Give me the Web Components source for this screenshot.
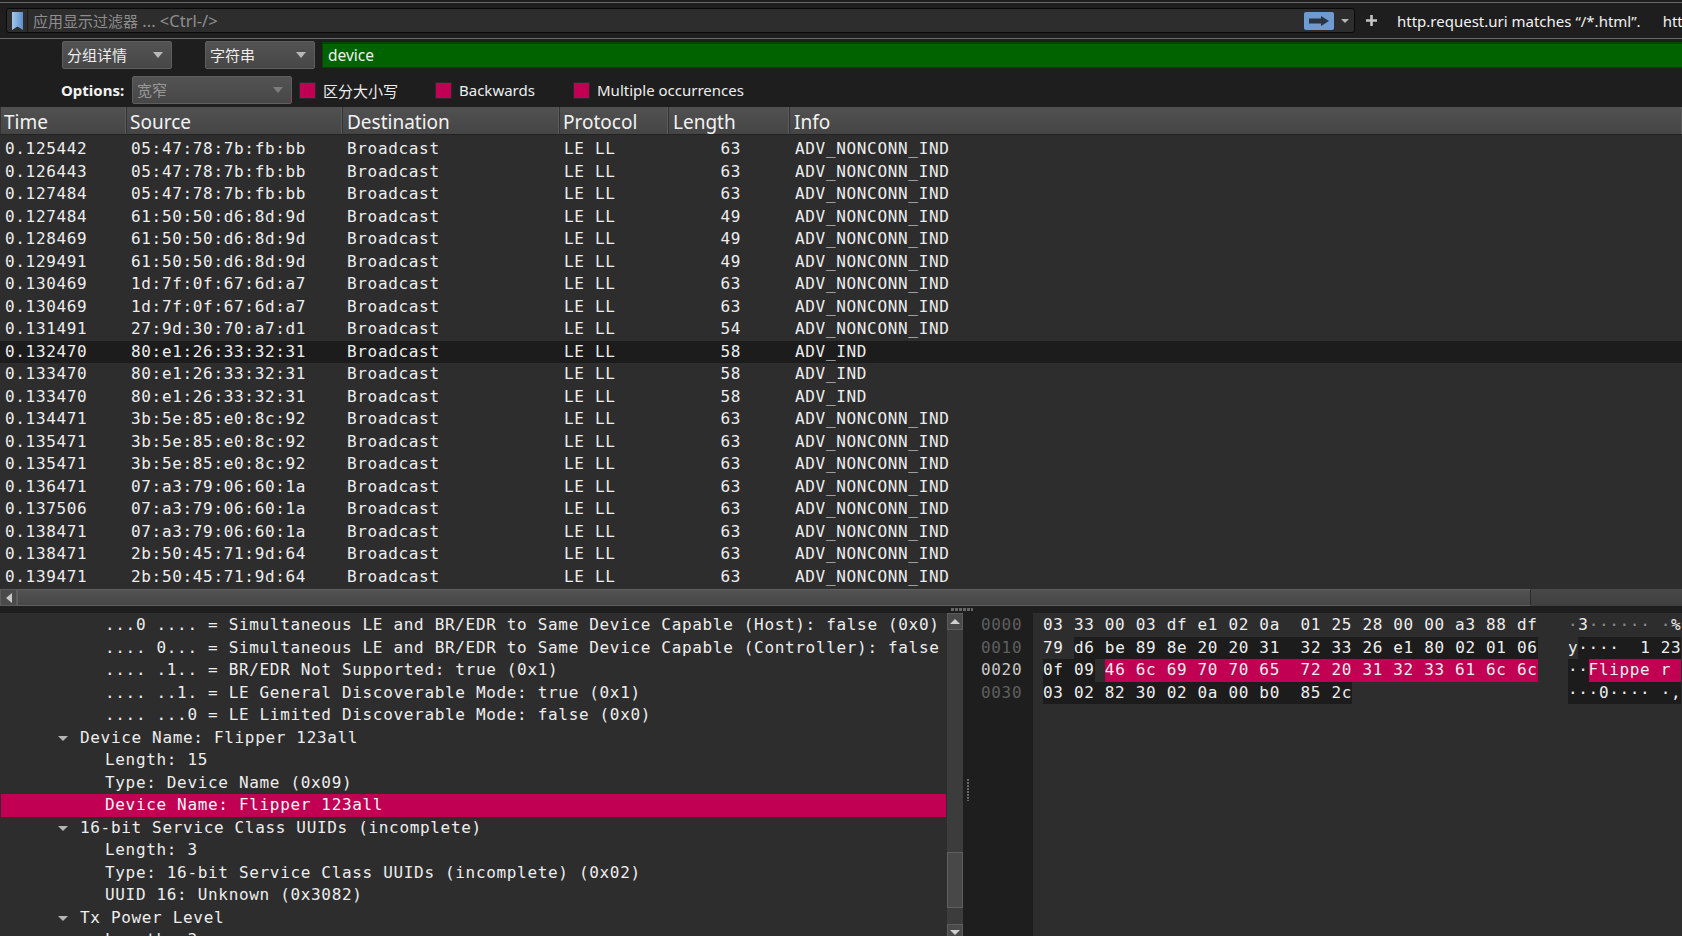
<!DOCTYPE html>
<html>
<head>
<meta charset="utf-8">
<style>
  html, body { margin: 0; height: 100%; background: #1e1e1e; overflow: hidden; }
  body { display: flex; flex-direction: column; height: 936px; font-family: "Noto Sans", "Noto Sans CJK SC", sans-serif; color: #eee; }
</style>
</head>
<body>
<filter-toolbar></filter-toolbar>
<find-bar></find-bar>
<packet-list></packet-list>
<h-scrollbar></h-scrollbar>
<lower-panes>
  <packet-details slot="details"></packet-details>
  <packet-bytes slot="bytes"></packet-bytes>
</lower-panes>

<script>
const MONO = `font-family: "DejaVu Sans Mono", monospace; font-size: 16px; letter-spacing: .67px;`;
const UI_CJK = `"Noto Sans", "Noto Sans CJK SC", sans-serif`;

class FilterToolbar extends HTMLElement {
  connectedCallback() {
    this.attachShadow({ mode: 'open' });
    this.shadowRoot.innerHTML = `
      <style>
        :host { display: flex; align-items: center; height: 37px; margin-top: 2px; box-sizing: border-box; flex: none;
          border-top: 1px solid #6a6a6a; border-bottom: 1px solid #6a6a6a; background: #1e1e1e; font-family: ${UI_CJK}; overflow: hidden; }
        .box { width: 1349px; height: 25px; margin-left: 6px; flex: none; background: #2d2d2d; border: 1px solid #0a0a0a; border-radius: 3px;
          box-sizing: border-box; display: flex; align-items: center; }
        .mark { width: 20px; height: 100%; display: flex; align-items: center; justify-content: center; border-right: 1px solid #1a1a1a; flex: none; }
        .hint { margin-left: 5px; color: #8e8e8e; font-size: 16.5px; flex: 1; white-space: pre; }
        .hint span { font-size: 15px; }
        .go { width: 30px; height: 18px; background: #6f9bd1; border-radius: 2px; display: flex; align-items: center; justify-content: center; }
        .drop { margin: 0 5px 0 7px; width: 0; height: 0; border: 4px solid transparent; border-top: 4px solid #b5b5b5; border-bottom: 0; }
        svg { display: block; }
        .plus { margin: 0 0 0 11px; flex: none; }
        .saved { color: #f2f2f2; font-size: 15px; white-space: nowrap; margin-left: 20px; flex: none; }
        .saved + .saved { margin-left: 22px; }
      </style>
      <div class="box">
        <div class="mark"><svg width="11" height="18" viewBox="0 0 11 18"><defs><linearGradient id="bm" x1="0" x2="1" y1="0" y2="0"><stop offset="0" stop-color="#a6c6ea"/><stop offset="1" stop-color="#5a90cc"/></linearGradient></defs><path d="M0 0H11V18L5.5 14.5L0 18Z" fill="url(#bm)"/></svg></div>
        <div class="hint"><span>应用显示过滤器</span> ... &lt;Ctrl-/&gt;</div>
        <div class="go"><svg width="22" height="12" viewBox="0 0 22 12"><path d="M1 3.5H13V1L21 6L13 11V8.5H1Z" fill="#2b3442"/></svg></div>
        <div class="drop"></div>
      </div>
      <svg class="plus" width="11" height="11" viewBox="0 0 11 11"><path d="M4.2 0H6.8V4.2H11V6.8H6.8V11H4.2V6.8H0V4.2H4.2Z" fill="#c4c4c4"/></svg>
      <span class="saved">http.request.uri matches “/*.html”.</span>
      <span class="saved">htt</span>`;
  }
}

class UiCombo extends HTMLElement {
  connectedCallback() {
    this.attachShadow({ mode: 'open' });
    this.shadowRoot.innerHTML = `
      <style>
        :host { display: flex; align-items: center; justify-content: space-between; box-sizing: border-box; height: 28px; flex: none;
          width: var(--w, 110px); padding: 0 8px 1px 4px; border: 1px solid #5e5e5e; border-radius: 2px; background: linear-gradient(#535353, #474747);
          font-family: ${UI_CJK}; font-size: 15px; color: var(--c, #eee); }
        i { width: 0; height: 0; border: 5px solid transparent; border-top: 6px solid var(--a, #b8b8b8); border-bottom: 0; }
      </style>
      <slot></slot><i></i>`;
  }
}

class UiCheck extends HTMLElement {
  connectedCallback() {
    this.attachShadow({ mode: 'open' });
    this.shadowRoot.innerHTML = `
      <style>
        :host { display: flex; align-items: center; flex: none; gap: 8px; width: var(--w, auto); font-family: ${UI_CJK}; font-size: 15px; color: #eee; }
        i { width: 15px; height: 15px; background: #c10053; box-shadow: 0 0 0 1px #2a2a2a; }
      </style>
      <i></i><slot></slot>`;
  }
}

class FindBar extends HTMLElement {
  connectedCallback() {
    this.attachShadow({ mode: 'open' });
    this.shadowRoot.innerHTML = `
      <style>
        :host { display: block; height: 68px; box-sizing: border-box; padding-top: 2px; flex: none; font-family: ${UI_CJK}; }
        .top { display: flex; align-items: center; height: 28px; padding-left: 62px; gap: 33px; }
        .top ui-combo:nth-child(2) { margin-right: -26px; }
        .input { flex: 1; height: 26px; box-sizing: border-box; background: #006300; border: 1px solid #0c3f0c; border-width: 2px 0 1px 1px; color: #f0f0f0; font-size: 15.5px; line-height: 22px; padding-left: 5px; }
        .opts { display: flex; align-items: center; height: 28px; margin-top: 7px; padding-left: 61px; }
        b { font-size: 15px; width: 71px; color: #f2f2f2; flex: none; }
        ui-combo.w { margin-right: 8px; }
      </style>
      <div class="top">
        <ui-combo style="--w:110px">分组详情</ui-combo>
        <ui-combo style="--w:110px">字符串</ui-combo>
        <div class="input">device</div>
      </div>
      <div class="opts">
        <b>Options:</b>
        <ui-combo class="w" style="--w:160px;--c:#979797;--a:#7d7d7d">宽窄</ui-combo>
        <ui-check style="--w:136px">区分大小写</ui-check>
        <ui-check style="--w:138px">Backwards</ui-check>
        <ui-check>Multiple occurrences</ui-check>
      </div>`;
  }
}

const PACKETS = [
  ['0.125442','05:47:78:7b:fb:bb',63,'ADV_NONCONN_IND'],
  ['0.126443','05:47:78:7b:fb:bb',63,'ADV_NONCONN_IND'],
  ['0.127484','05:47:78:7b:fb:bb',63,'ADV_NONCONN_IND'],
  ['0.127484','61:50:50:d6:8d:9d',49,'ADV_NONCONN_IND'],
  ['0.128469','61:50:50:d6:8d:9d',49,'ADV_NONCONN_IND'],
  ['0.129491','61:50:50:d6:8d:9d',49,'ADV_NONCONN_IND'],
  ['0.130469','1d:7f:0f:67:6d:a7',63,'ADV_NONCONN_IND'],
  ['0.130469','1d:7f:0f:67:6d:a7',63,'ADV_NONCONN_IND'],
  ['0.131491','27:9d:30:70:a7:d1',54,'ADV_NONCONN_IND'],
  ['0.132470','80:e1:26:33:32:31',58,'ADV_IND',1],
  ['0.133470','80:e1:26:33:32:31',58,'ADV_IND'],
  ['0.133470','80:e1:26:33:32:31',58,'ADV_IND'],
  ['0.134471','3b:5e:85:e0:8c:92',63,'ADV_NONCONN_IND'],
  ['0.135471','3b:5e:85:e0:8c:92',63,'ADV_NONCONN_IND'],
  ['0.135471','3b:5e:85:e0:8c:92',63,'ADV_NONCONN_IND'],
  ['0.136471','07:a3:79:06:60:1a',63,'ADV_NONCONN_IND'],
  ['0.137506','07:a3:79:06:60:1a',63,'ADV_NONCONN_IND'],
  ['0.138471','07:a3:79:06:60:1a',63,'ADV_NONCONN_IND'],
  ['0.138471','2b:50:45:71:9d:64',63,'ADV_NONCONN_IND'],
  ['0.139471','2b:50:45:71:9d:64',63,'ADV_NONCONN_IND'],
];

class PacketList extends HTMLElement {
  connectedCallback() {
    this.attachShadow({ mode: 'open' });
    const cols = '126px 216px 217px 109px 121px 1fr';
    const rows = PACKETS.map(p => `
      <div class="row${p[4] ? ' sel' : ''}">
        <span>${p[0]}</span><span>${p[1]}</span><span>Broadcast</span><span>LE LL</span><span class="len">${p[2]}</span><span class="info">${p[3]}</span>
      </div>`).join('');
    this.shadowRoot.innerHTML = `
      <style>
        :host { display: block; height: 482px; flex: none; background: #2d2d2d; overflow: hidden; }
        .head { display: grid; grid-template-columns: ${cols}; height: 28px; margin-bottom: 3px; box-sizing: border-box; border-bottom: 1px solid #222; background: linear-gradient(#515151, #454545);
          font-family: ${UI_CJK}; font-size: 19px; line-height: 30px; color: #f2f2f2; }
        .head span { padding-left: 4px; border-left: 1px solid #333; border-right: 1px solid #5c5c5c; box-sizing: border-box; overflow: hidden; }
        .head .t { padding-left: 3px; }
        .row { display: grid; grid-template-columns: ${cols}; height: 22.5px; line-height: 22.5px; ${MONO} color: #eee; white-space: nowrap; }
        .row span { padding-left: 5px; }
        .row .len { padding-left: 0; padding-right: 48px; text-align: right; }
        .row .info { padding-left: 6px; }
        .sel { background: #1c1c1c; }
      </style>
      <div class="head"><span class="t">Time</span><span class="t">Source</span><span>Destination</span><span class="t">Protocol</span><span>Length</span><span>Info</span></div>
      ${rows}`;
  }
}

class HScrollbar extends HTMLElement {
  connectedCallback() {
    this.attachShadow({ mode: 'open' });
    this.shadowRoot.innerHTML = `
      <style>
        :host { display: flex; height: 17px; margin-bottom: 7px; background: linear-gradient(#484848, #3f3f3f); flex: none; }
        .btn { width: 17px; box-sizing: border-box; border: 1px solid #5c5c5c; background: #4a4a4a; display: flex; align-items: center; justify-content: center; }
        .btn i { width: 0; height: 0; border: 5px solid transparent; border-right: 6px solid #c8c8c8; border-left: 0; }
        .thumb { width: 1514px; box-sizing: border-box; border: 1px solid #5f5f5f; border-right-color: #2a2a2a; background: linear-gradient(#525252, #474747); }
      </style>
      <div class="btn"><i></i></div><div class="thumb"></div>`;
  }
}

class LowerPanes extends HTMLElement {
  connectedCallback() {
    this.attachShadow({ mode: 'open' });
    this.shadowRoot.innerHTML = `
      <style>
        :host { display: flex; flex: 1; min-height: 0; background: #1e1e1e; position: relative; }
        .split { width: 7px; flex: none; display: flex; align-items: center; justify-content: flex-end; padding-right: 1px; box-sizing: border-box; }
        .split i { width: 2px; height: 22px; margin-top: 30px; background: repeating-linear-gradient(#666 0 2px, #1e1e1e 2px 3px); }
        .dots { position: absolute; top: -5px; left: 951px; width: 22px; height: 3px; background: repeating-linear-gradient(90deg, #666 0 3px, #1e1e1e 3px 4px); }
      </style>
      <div class="dots"></div>
      <slot name="details"></slot>
      <div class="split"><i></i></div>
      <slot name="bytes"></slot>`;
  }
}

const DETAILS = [
  [2, '...0 .... = Simultaneous LE and BR/EDR to Same Device Capable (Host): false (0x0)'],
  [2, '.... 0... = Simultaneous LE and BR/EDR to Same Device Capable (Controller): false'],
  [2, '.... .1.. = BR/EDR Not Supported: true (0x1)'],
  [2, '.... ..1. = LE General Discoverable Mode: true (0x1)'],
  [2, '.... ...0 = LE Limited Discoverable Mode: false (0x0)'],
  [1, 'Device Name: Flipper 123all', 1],
  [2, 'Length: 15'],
  [2, 'Type: Device Name (0x09)'],
  [2, 'Device Name: Flipper 123all', 0, 1],
  [1, '16-bit Service Class UUIDs (incomplete)', 1],
  [2, 'Length: 3'],
  [2, 'Type: 16-bit Service Class UUIDs (incomplete) (0x02)'],
  [2, 'UUID 16: Unknown (0x3082)'],
  [1, 'Tx Power Level', 1],
  [2, 'Length: 3'],
];

class PacketDetails extends HTMLElement {
  connectedCallback() {
    this.attachShadow({ mode: 'open' });
    const rows = DETAILS.map(([lvl, txt, open, sel]) => `
      <div class="row${sel ? ' sel' : ''}" style="padding-left:${lvl === 1 ? 80 : 105}px">${open ? '<i></i>' : ''}${txt}</div>`).join('');
    this.shadowRoot.innerHTML = `
      <style>
        :host { display: flex; width: 963px; height: 100%; flex: none; background: #2d2d2d; overflow: hidden; }
        .tree { flex: 1; min-width: 0; padding-top: 1px; }
        .row { height: 22.5px; line-height: 22.5px; ${MONO} color: #eee; white-space: pre; position: relative; box-sizing: border-box; }
        .row i { position: absolute; left: 58px; top: 9px; width: 0; height: 0; border: 5px solid transparent; border-top: 5px solid #b5b5b5; border-bottom: 0; }
        .sel { background: #c10053; color: #f6f6f6; margin-left: 1px; padding-left: 104px !important; }
        .bar { width: 16px; margin-left: 1px; flex: none; display: flex; flex-direction: column; background: #3c3c3c; }
        .btn { height: 17px; box-sizing: border-box; border: 1px solid #5c5c5c; background: #4a4a4a; display: flex; align-items: center; justify-content: center; flex: none; }
        .btn i { width: 0; height: 0; border: 5px solid transparent; }
        .up i { border-bottom: 5px solid #d0d0d0; border-top: 0; }
        .dn i { border-top: 5px solid #d0d0d0; border-bottom: 0; }
        .track { height: 222px; flex: none; }
        .thumb { height: 56px; flex: none; box-sizing: border-box; border: 1px solid #606060; background: #484848; }
        .rest { height: 16px; flex: none; }
      </style>
      <div class="tree">${rows}</div>
      <div class="bar">
        <div class="btn up"><i></i></div>
        <div class="track"></div>
        <div class="thumb"></div>
        <div class="rest"></div>
        <div class="btn dn"><i></i></div>
      </div>`;
  }
}

// m = dark span of the parent field, s = selected field, q = dim dots
const BYTES = [
  ['0000', '03 33 00 03 df e1 02 0a  01 25 28 00 00 a3 88 df', '<q>·</q>3<q>······ ·</q>%'],
  ['0010', '79 <m>d6 be 89 8e 20 20 31  32 33 26 e1 80 02 01 06</m>', 'y<m>····  1 23</m>'],
  ['0020', '<m>0f 09</m> <s>46 6c 69 70 70 65  72 20 31 32 33 61 6c 6c</s>', '<m>··</m><s>Flippe r </s>'],
  ['0030', '<m>03 02 82 30 02 0a 00 b0  85 2c</m>', '<m>···0···· ·,</m>'],
];

class PacketBytes extends HTMLElement {
  connectedCallback() {
    this.attachShadow({ mode: 'open' });
    const off = BYTES.map((b, i) => `<div class="${i === 2 ? 'on' : ''}">${b[0]}</div>`).join('');
    const hex = BYTES.map(b => `<div>${b[1]}</div>`).join('');
    const asc = BYTES.map(b => `<div>${b[2]}</div>`).join('');
    this.shadowRoot.innerHTML = `
      <style>
        :host { display: flex; flex: 1; min-width: 0; height: 100%; overflow: hidden; background: #2d2d2d; ${MONO} color: #eee; white-space: pre; }
        .off { width: 63px; flex: none; padding-left: 11px; box-sizing: border-box; background: #1e1e1e; color: #5f5f5f; padding-top: 1px; }
        .off .on { color: #c8c8c8; }
        .hex { width: 535px; flex: none; padding-left: 10px; box-sizing: border-box; padding-top: 1px; }
        .asc { flex: 1; padding-top: 1px; min-width: 0; overflow: hidden; }
        div div { height: 22.5px; line-height: 22.5px; }
        m { background: #1c1c1c; display: inline-block; }
        s { background: #c10053; text-decoration: none; display: inline-block; }
        q { quotes: none; color: #8a8a8a; }
      </style>
      <div class="off">${off}</div>
      <div class="hex">${hex}</div>
      <div class="asc">${asc}</div>`;
  }
}

customElements.define('filter-toolbar', FilterToolbar);
customElements.define('ui-combo', UiCombo);
customElements.define('ui-check', UiCheck);
customElements.define('find-bar', FindBar);
customElements.define('packet-list', PacketList);
customElements.define('h-scrollbar', HScrollbar);
customElements.define('lower-panes', LowerPanes);
customElements.define('packet-details', PacketDetails);
customElements.define('packet-bytes', PacketBytes);
</script>
</body>
</html>
